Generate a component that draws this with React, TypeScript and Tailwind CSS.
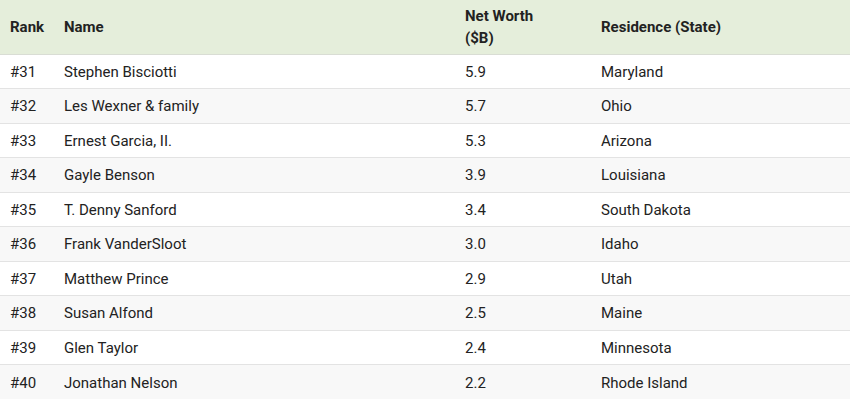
import React from "react";

const rows = [
  ["#31", "Stephen Bisciotti", "5.9", "Maryland"],
  ["#32", "Les Wexner & family", "5.7", "Ohio"],
  ["#33", "Ernest Garcia, II.", "5.3", "Arizona"],
  ["#34", "Gayle Benson", "3.9", "Louisiana"],
  ["#35", "T. Denny Sanford", "3.4", "South Dakota"],
  ["#36", "Frank VanderSloot", "3.0", "Idaho"],
  ["#37", "Matthew Prince", "2.9", "Utah"],
  ["#38", "Susan Alfond", "2.5", "Maine"],
  ["#39", "Glen Taylor", "2.4", "Minnesota"],
  ["#40", "Jonathan Nelson", "2.2", "Rhode Island"],
];

export default function App() {
  return (
    <div className="w-[850px] h-[403px] bg-white text-[#222] overflow-hidden" style={{ fontFamily: "Roboto, 'Noto Sans', sans-serif" }}>
      <table className="w-[850px] table-fixed border-collapse text-[15px]">
        <colgroup>
          <col className="w-[54px]" />
          <col className="w-[401px]" />
          <col className="w-[136px]" />
          <col className="w-[259px]" />
        </colgroup>
        <thead>
          <tr className="bg-[#e5eedb] h-[54px] border-b border-[#d9ddd4]">
            <th className="text-left font-bold pl-[10px] leading-[22px] align-middle">Rank</th>
            <th className="text-left font-bold pl-[10px] leading-[22px] align-middle">Name</th>
            <th className="text-left font-bold pl-[10px] leading-[22px] align-middle">
              Net Worth
              <br />($B)
            </th>
            <th className="text-left font-bold pl-[10px] leading-[22px] align-middle">Residence (State)</th>
          </tr>
        </thead>
        <tbody>
          {rows.map((r, i) => (
            <tr key={r[0]} className={`h-[34.5px] border-t border-[#e3e3e3] ${i % 2 === 1 ? "bg-[#f8f8f8]" : "bg-white"}`}>
              <td className="pl-[10px] pt-[1px] align-middle leading-[20px]">{r[0]}</td>
              <td className="pl-[10px] pt-[1px] align-middle leading-[20px]">{r[1]}</td>
              <td className="pl-[10px] pt-[1px] align-middle leading-[20px]">{r[2]}</td>
              <td className="pl-[10px] pt-[1px] align-middle leading-[20px]">{r[3]}</td>
            </tr>
          ))}
        </tbody>
      </table>
    </div>
  );
}
